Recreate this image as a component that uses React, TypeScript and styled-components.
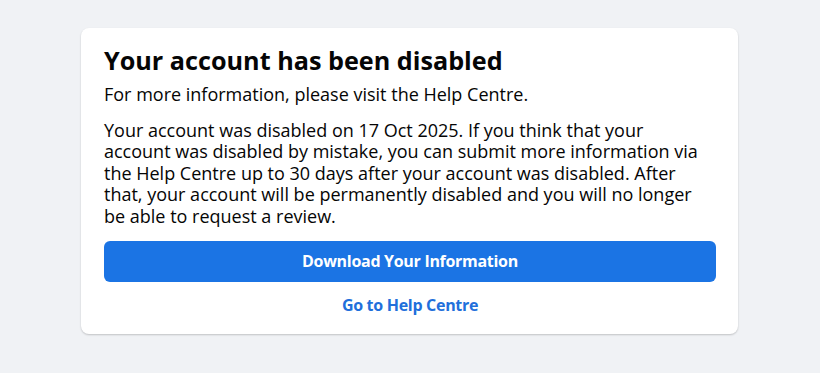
import styled, { createGlobalStyle } from "styled-components";

const GlobalStyle = createGlobalStyle`
  html, body {
    margin: 0;
    padding: 0;
    background: #f0f2f5;
  }
  body {
    font-family: "Segoe UI", "Open Sans", "Noto Sans", sans-serif;
    color: #050505;
  }
`;

const Page = styled.main`
  min-height: 373px;
  padding-top: 28px;
  box-sizing: border-box;
`;

const Card = styled.section`
  width: 657px;
  margin: 0 0 0 81px;
  box-sizing: border-box;
  padding: 16px 22px 18px 23px;
  background: #fff;
  border-radius: 8px;
  box-shadow: 0 1px 2px rgba(0, 0, 0, 0.2);
`;

const Title = styled.h1`
  margin: 0;
  font-size: 25.2px;
  line-height: 32px;
  font-weight: 700;
`;

const Text = styled.p<{ $gap?: number }>`
  margin: ${(p) => p.$gap ?? 0}px 0 0;
  max-width: 604px;
  font-size: 18px;
  line-height: 21.6px;
`;

const Actions = styled.div`
  display: flex;
  flex-direction: column;
  align-items: stretch;
  margin-top: 13px;
`;

const PrimaryButton = styled.button`
  height: 41px;
  border: none;
  border-radius: 6px;
  background: #1b74e4;
  color: #fff;
  font-family: inherit;
  font-size: 16px;
  font-weight: 700;
  letter-spacing: -0.3px;
  cursor: pointer;
`;

const LinkButton = styled.a`
  display: block;
  text-align: center;
  margin-top: 12px;
  line-height: 22px;
  color: #216fdb;
  font-size: 16px;
  font-weight: 700;
  letter-spacing: -0.3px;
  text-decoration: none;
`;

export default function App() {
  return (
    <>
      <GlobalStyle />
      <Page>
        <Card>
          <Title>Your account has been disabled</Title>
          <Text $gap={8}>For more information, please visit the Help Centre.</Text>
          <Text $gap={14}>
            Your account was disabled on 17 Oct 2025. If you think that your
            account was disabled by mistake, you can submit more information via
            the Help Centre up to 30 days after your account was disabled. After
            that, your account will be permanently disabled and you will no longer
            be able to request a review.
          </Text>
          <Actions>
            <PrimaryButton>Download Your Information</PrimaryButton>
            <LinkButton href="#">Go to Help Centre</LinkButton>
          </Actions>
        </Card>
      </Page>
    </>
  );
}
